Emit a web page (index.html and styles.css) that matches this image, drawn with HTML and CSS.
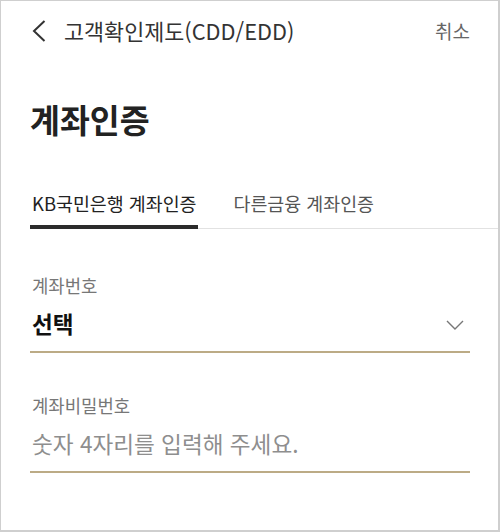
FILE: index.html
```html
<!DOCTYPE html>
<html lang="ko">
<head>
    <meta charset="UTF-8">
    <meta name="viewport" content="width=device-width, initial-scale=1.0">
    <title>계좌인증</title>
    <link rel="stylesheet" href="styles.css">
</head>
<body>

    <div class="screen">
        <header class="topbar">
            <button type="button" class="back" aria-label="뒤로">
                <svg width="14" height="22" viewBox="0 0 14 22">
                    <polyline points="12.5,1 2,11 12.5,21" fill="none" stroke="#333" stroke-width="2"/>
                </svg>
            </button>
            <h1 class="topbar-title">고객확인제도(CDD/EDD)</h1>
            <button type="button" class="cancel">취소</button>
        </header>

        <main class="content">
            <h2 class="page-title">계좌인증</h2>

            <div class="tabs">
                <button type="button" class="tab active">KB국민은행 계좌인증</button>
                <button type="button" class="tab">다른금융 계좌인증</button>
            </div>

            <form class="form">
                <div class="field">
                    <label class="field-label">계좌번호</label>
                    <div class="field-box">
                        <span class="field-value">선택</span>
                        <svg class="arrow" width="18" height="10" viewBox="0 0 18 10">
                            <polyline points="1,1 9,9 17,1" fill="none" stroke="#777" stroke-width="1.4"/>
                        </svg>
                    </div>
                </div>

                <div class="field">
                    <label class="field-label">계좌비밀번호</label>
                    <div class="field-box">
                        <span class="field-placeholder">숫자 4자리를 입력해 주세요.</span>
                    </div>
                </div>
            </form>
        </main>
    </div>

</body>
</html>
```

FILE: styles.css
```css
body {
    margin: 0;
    padding: 0;
    background-color: #fff;
    font-family: "Noto Sans CJK KR", "Noto Sans", sans-serif;
    color: #222;
}

.screen {
    height: 532px;
    border: 1px solid #cfcfcf;
    border-width: 1px 2px 2px 1px;
    box-sizing: border-box;
    overflow: hidden;
}

button {
    font-family: inherit;
    background: none;
    border: none;
    padding: 0;
    cursor: pointer;
}

/* barre du haut */
.topbar {
    height: 59px;
    display: flex;
    align-items: center;
    padding: 0 28px 0 31px;
}

.back {
    display: flex;
    width: 14px;
    height: 22px;
}

.topbar-title {
    flex: 1;
    margin: 0 0 0 18px;
    font-size: 21.8px;
    font-weight: 400;
    color: #333;
    line-height: 28px;
}

.cancel {
    font-size: 19px;
    color: #666;
    line-height: 24px;
}

.content {
    padding-left: 29px;
}

.page-title {
    margin: 39px 0 0;
    font-size: 32.5px;
    font-weight: 700;
    line-height: 40px;
    color: #222;
}

/* onglets */
.tabs {
    display: flex;
    gap: 33px;
    margin-top: 52px;
    border-bottom: 1px solid #e2e2e2;
}

.tab {
    font-size: 18.4px;
    line-height: 24px;
    color: #555;
    padding: 0 2px 10px;
    margin-bottom: -1px;
    border-bottom: 4px solid transparent;
}

.tab.active {
    color: #222;
    border-bottom-color: #2b2b2b;
}

/* formulaire */
.form {
    padding-right: 28px;
    padding-top: 45px;
}

.field + .field {
    margin-top: 41px;
}

.field-label {
    display: block;
    font-size: 17.8px;
    line-height: 22px;
    color: #777;
    padding-left: 2px;
}

.field-box {
    display: flex;
    align-items: center;
    justify-content: space-between;
    margin-top: 14px;
    padding: 0 6px 13px 2px;
    border-bottom: 2px solid #bcab86;
}

.field-value {
    font-size: 22.6px;
    font-weight: 700;
    line-height: 28px;
    color: #111;
}

.field-placeholder {
    font-size: 22.6px;
    line-height: 28px;
    color: #8e8e8e;
}

.arrow {
    margin-top: 2px;
}
```
